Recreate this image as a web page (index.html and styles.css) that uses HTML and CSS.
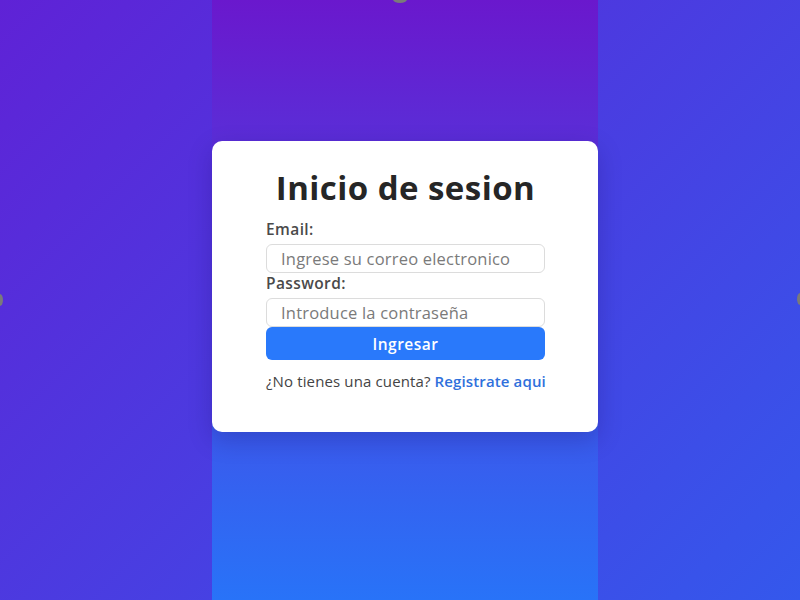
FILE: index.html
```html
<!DOCTYPE html>
<html lang="es">
<head>
<meta charset="utf-8">
<title>Inicio de sesion</title>
<link rel="stylesheet" href="styles.css">
</head>
<body>
<span class="dot dot-top"></span>
<span class="dot dot-left"></span>
<span class="dot dot-right"></span>
<main class="column">
  <form class="card">
    <h1 class="title">Inicio de sesion</h1>
    <label class="label" for="email">Email:</label>
    <input class="field" id="email" type="email" placeholder="Ingrese su correo electronico">
    <label class="label" for="pass">Password:</label>
    <input class="field" id="pass" type="password" placeholder="Introduce la contraseña">
    <button class="btn" type="button">Ingresar</button>
    <p class="foot">¿No tienes una cuenta? <a class="link" href="#">Registrate aqui</a></p>
  </form>
</main>
</body>
</html>
```
FILE: styles.css
```css
* { box-sizing: border-box; }
html, body { height: 100%; }
body {
  margin: 0;
  padding-left: 10px;
  font-family: "Open Sans", "Noto Sans", sans-serif;
  background: linear-gradient(135deg, #5f22d6 0%, #3458ec 100%);
  display: flex;
  justify-content: center;
  overflow: hidden;
}
.column {
  width: 386px;
  height: 100vh;
  background: linear-gradient(to bottom, #6a18cd 0%, #2873f8 100%);
  display: flex;
  flex-direction: column;
  justify-content: center;
}
.card {
  background: #fff;
  border-radius: 10px;
  box-shadow: 0 8px 24px rgba(20, 10, 80, 0.22);
  padding: 27px 53px 41px 54px;
  display: flex;
  flex-direction: column;
  margin-top: -27px;
}
.title {
  margin: 0 0 11px;
  text-align: center;
  font-size: 33px;
  font-weight: 700;
  letter-spacing: 0.45px;
  color: #262626;
  line-height: 40px;
}
.label {
  font-size: 15.5px;
  font-weight: 600;
  letter-spacing: 0.4px;
  color: #4a4a4a;
  line-height: 20px;
  margin-bottom: 5px;
}
.field {
  width: 100%;
  height: 29px;
  border: 1px solid #dcdcdc;
  border-radius: 6px;
  padding: 0 14px;
  font-family: inherit;
  font-size: 16.5px;
  letter-spacing: 0.2px;
  color: #333;
}
.field::placeholder { color: #7a7a7a; }
.btn {
  height: 33px;
  border: none;
  border-radius: 6px;
  background: #2979fb;
  color: #fff;
  font-family: inherit;
  font-size: 15.5px;
  font-weight: 600;
  letter-spacing: 0.5px;
}
.foot {
  margin: 11px 0 0;
  font-size: 15px;
  letter-spacing: 0.13px;
  color: #444;
  line-height: 20px;
  white-space: nowrap;
}
.link {
  color: #2f70dc;
  font-weight: 600;
  text-decoration: none;
}
.dot {
  position: absolute;
  background: #7a7a7a;
  border-radius: 50%;
}
.dot-top { left: 393px; top: -4px; width: 14px; height: 7px; }
.dot-left { left: -3px; top: 294px; width: 6px; height: 12px; }
.dot-right { right: -3px; top: 293px; width: 6px; height: 12px; }
```
